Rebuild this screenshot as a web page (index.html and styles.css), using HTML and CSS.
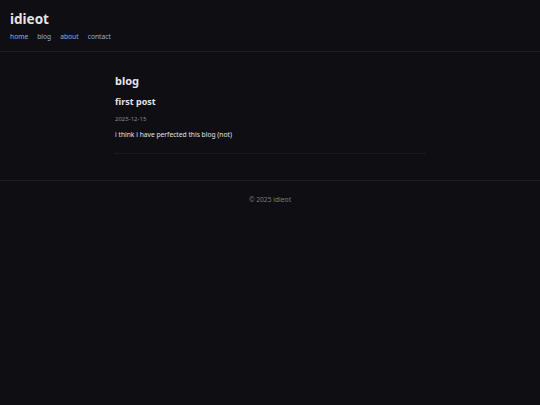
FILE: index.html
```html
<!DOCTYPE html>
<html lang="en">
<head>
  <meta charset="UTF-8">
  <meta name="viewport" content="width=device-width, initial-scale=1.0">
  <title>idieot</title>
  <link rel="stylesheet" href="styles.css">
</head>
<body>
  <header class="header">
    <h1 class="site-title">idieot</h1>
    <nav class="nav">
      <a href="#">home</a>
      <a href="#">blog</a>
      <a href="#">about</a>
      <a href="#">contact</a>
    </nav>
  </header>
  <main class="content">
    <h2>blog</h2>
    <article class="post">
      <h3>first post</h3>
      <p class="date">2025-12-15</p>
      <p>i think i have perfected this blog (not)</p>
    </article>
  </main>
  <footer class="footer">
    © 2025 idieot
  </footer>
</body>
</html>
```

FILE: styles.css
```css
body {
  margin: 0;
  font-family: "Noto Sans", sans-serif;
  background-color: #0e0e13;
  color: #e4e4e8;
  font-size: 6.7px;
  min-height: 405px;
}
.header {
  padding: 10px 10px 9px;
  border-bottom: 1px solid #1d1d25;
}
.site-title {
  margin: 0 0 4px;
  font-size: 13.5px;
  font-weight: 700;
  line-height: 18px;
}
.nav {
  display: flex;
  gap: 9px;
}
.nav a {
  color: #93aee0;
  text-decoration: none;
  line-height: 10px;
}
.content {
  max-width: 310px;
  margin: 0 auto;
  padding: 22px 0 26px;
}
.content h2 {
  margin: 0 0 8px;
  font-size: 11px;
  line-height: 14px;
}
.post {
  padding-bottom: 13px;
  border-bottom: 1px dotted #24242c;
}
.post h3 {
  margin: 0 0 6px;
  font-size: 9px;
  line-height: 12px;
}
.post p {
  margin: 0;
  line-height: 10px;
}
.post .date {
  font-size: 6px;
  color: #8a8a94;
  margin-bottom: 6px;
}
.footer {
  border-top: 1px solid #1d1d25;
  padding: 14px 0;
  text-align: center;
  color: #7d7d86;
}
```
